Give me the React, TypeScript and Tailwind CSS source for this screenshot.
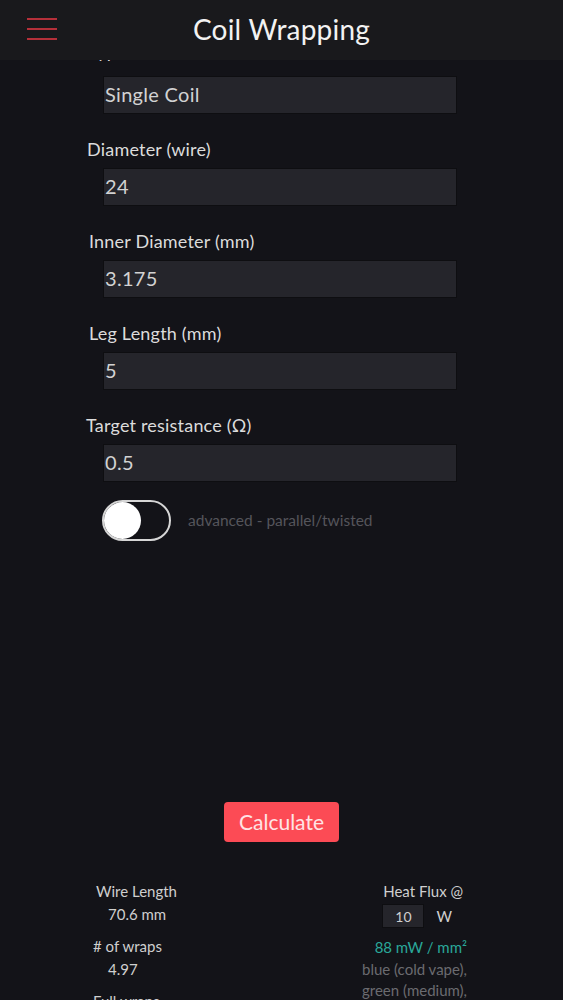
import { useState } from 'react'

// campos do formulário (o primeiro fica parcialmente escondido sob o cabeçalho)
const FIELDS = [
  { label: 'Type', value: 'Single Coil', labelClass: 'ml-[1px] -mt-[6px] mb-[6px]' },
  { label: 'Diameter (wire)', value: '24', labelClass: 'ml-0' },
  { label: 'Inner Diameter (mm)', value: '3.175', labelClass: 'ml-[2px]' },
  { label: 'Leg Length (mm)', value: '5', labelClass: 'ml-[2px]' },
  { label: 'Target resistance (Ω)', value: '0.5', labelClass: '-ml-[1px]' },
]

function Field({ label, value, labelClass }: { label: string; value: string; labelClass: string }) {
  return (
    <div className="flex flex-col mb-[23px]">
      <label className={`h-[24px] leading-[24px] text-[18px] tracking-[0.2px] text-[#dcdcdc] ${labelClass}`}>{label}</label>
      <input
        defaultValue={value}
        className="mt-[7px] ml-[16px] w-[354px] h-[38px] px-[1px] pb-[3px] bg-[#25252b] border border-[#0e0e11] text-[20px] tracking-[0.3px] text-[#d2d2d2] outline-none"
      />
    </div>
  )
}

export default function App() {
  const [advanced, setAdvanced] = useState(false)

  return (
    <div className="min-h-screen bg-[#131318] font-['Lato','Noto_Sans',sans-serif] overflow-hidden">
      {/* cabeçalho fixo */}
      <header className="fixed top-0 inset-x-0 z-10 h-[60px] bg-[#19191c] flex items-center justify-center">
        <button aria-label="menu" className="absolute left-[27px] top-[18px] flex flex-col gap-[8px]">
          <span className="block w-[30px] h-[2px] bg-[#b5303a]" />
          <span className="block w-[30px] h-[2px] bg-[#b5303a]" />
          <span className="block w-[30px] h-[2px] bg-[#b5303a]" />
        </button>
        <h1 className="text-[28px] text-[#f2f2f2] tracking-[0.2px] -mt-[2px]">Coil Wrapping</h1>
      </header>

      <main className="pt-[45px]">
        <div className="pl-[87px]">
          {FIELDS.map(f => (
            <Field key={f.label} {...f} />
          ))}
        </div>

        {/* toggle avançado */}
        <div className="-mt-[5px] pl-[102px] flex items-center gap-[17px]">
          <button
            onClick={() => setAdvanced(v => !v)}
            className={`relative w-[69px] h-[41px] rounded-full border-2 ${
              advanced ? 'border-[#fc4c55] bg-[#fc4c55]' : 'border-[#d6d6d6] bg-transparent'
            }`}
          >
            <span
              className={`absolute top-[0px] w-[37px] h-[37px] rounded-full bg-white ${advanced ? 'right-0' : 'left-0'}`}
            />
          </button>
          <span className="text-[15.5px] text-[#55555b]">advanced - parallel/twisted</span>
        </div>

        <div className="mt-[261px] flex justify-center">
          <button className="w-[115px] h-[40px] rounded-[4px] bg-[#fc4b55] text-[21px] text-[#ffe3e5]">
            Calculate
          </button>
        </div>

        {/* resultados */}
        <div className="mt-[38px] flex justify-between pl-[93px] pr-[96px] text-[15px] text-[#cfcfcf]">
          <div className="flex flex-col">
            <div className="leading-[23px] pl-[3px]">Wire Length</div>
            <div className="leading-[23px] pl-[15px]">70.6 mm</div>
            <div className="leading-[23px] mt-[9px]"># of wraps</div>
            <div className="leading-[23px] pl-[15px]">4.97</div>
            <div className="leading-[23px] mt-[9px]">Full wraps</div>
          </div>
          <div className="flex flex-col items-end text-right">
            <div className="leading-[23px] mr-[4px]">Heat Flux @</div>
            <div className="mt-[1px] mr-[15px] flex items-center gap-[12px]">
              <input
                defaultValue="10"
                className="w-[42px] h-[24px] bg-[#25252b] border border-[#0e0e11] text-center text-[14px] text-[#cfcfcf] outline-none"
              />
              <span>W</span>
            </div>
            <div className="mt-[8px] leading-[23px] text-[#2aa89a]">88 mW / mm²</div>
            <div className="leading-[21px] text-[#6b6b70]">blue (cold vape),</div>
            <div className="leading-[21px] text-[#6b6b70]">green (medium),</div>
          </div>
        </div>
      </main>
    </div>
  )
}
